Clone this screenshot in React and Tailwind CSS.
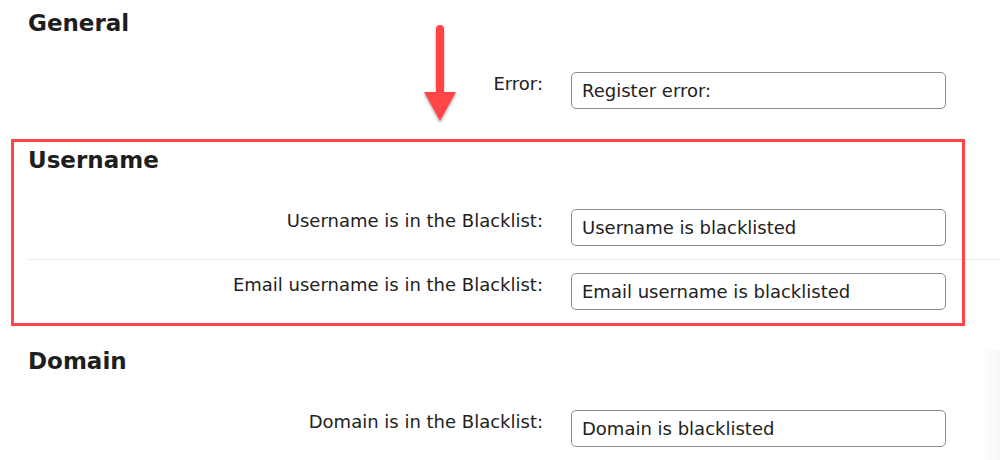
import React from 'react';

const font = { fontFamily: '"DejaVu Sans", Verdana, sans-serif' };

const Row = ({ label, value, divider }) => (
  <div className={`flex items-start py-[13px] ${divider ? 'border-b border-[#ececec]' : ''}`}>
    <label className="w-[515px] shrink-0 text-right text-[18px] leading-6 text-[#222]">{label}</label>
    <input
      readOnly
      value={value}
      className="ml-[28px] h-[37px] w-[375px] rounded-[5px] border border-[#8c8c8c] bg-white px-[10px] text-[18px] text-[#222] outline-none"
      style={font}
    />
  </div>
);

const Section = ({ title, first, children }) => (
  <section className={first ? 'pt-[9px]' : 'pt-[24px]'}>
    <h3 className="h-[28px] text-[23px] font-bold leading-7 text-[#1e1e1e]">{title}</h3>
    <div className="mt-[22px]">{children}</div>
  </section>
);

export default function App() {
  return (
    <div className="relative h-[460px] w-[1000px] overflow-hidden bg-white" style={font}>
      <div className="pl-[28px]">
        <Section title="General" first>
          <Row label="Error:" value="Register error:" />
        </Section>
        <Section title="Username">
          <Row label="Username is in the Blacklist:" value="Username is blacklisted" divider />
          <Row label="Email username is in the Blacklist:" value="Email username is blacklisted" />
        </Section>
        <Section title="Domain">
          <Row label="Domain is in the Blacklist:" value="Domain is blacklisted" />
        </Section>
      </div>

      {/* annotation overlay */}
      <div className="pointer-events-none absolute left-[11px] top-[139px] h-[187px] w-[954px] border-[3px] border-[#ff4545]" />
      <svg className="absolute left-[418px] top-[20px]" width="44" height="108" viewBox="0 0 44 108">
        <defs>
          <filter id="sh" x="-50%" y="-20%" width="200%" height="140%">
            <feDropShadow dx="0" dy="2" stdDeviation="1.6" floodColor="#000" floodOpacity="0.35" />
          </filter>
        </defs>
        <g filter="url(#sh)" fill="#ff4545">
          <rect x="18" y="5" width="8" height="70" rx="4" />
          <path d="M6 72 L38 72 L22 101 Z" />
        </g>
      </svg>
      <div className="pointer-events-none absolute right-0 top-[350px] h-[110px] w-[20px] bg-gradient-to-r from-transparent to-[#f8f8f8]" />
    </div>
  );
}
